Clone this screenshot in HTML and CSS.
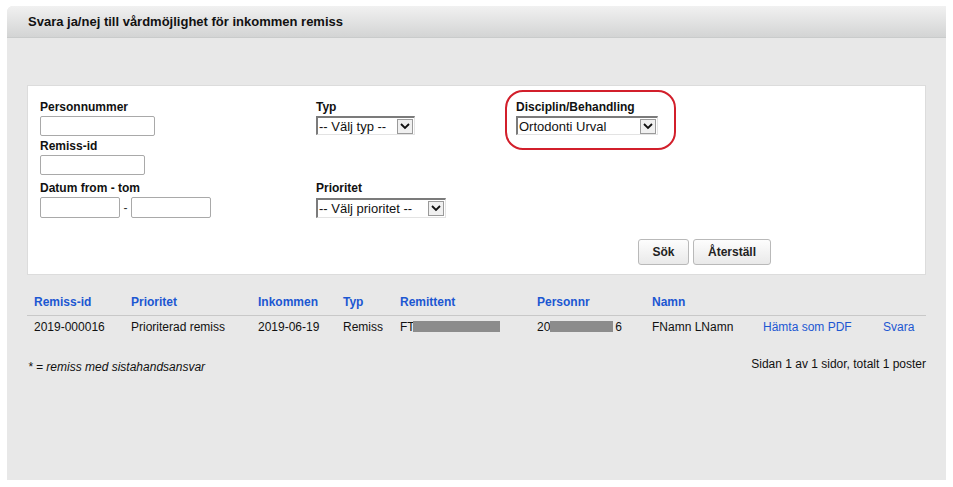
FILE: index.html
```html
<!DOCTYPE html>
<html lang="sv">
<head>
  <meta charset="UTF-8">
  <meta name="viewport" content="width=device-width, initial-scale=1.0">
  <link rel="stylesheet" href="styles.css">
</head>
<body>

  <div class="panel">
    <div class="panel-header">Svara ja/nej till vårdmöjlighet för inkommen remiss</div>

    <div class="panel-body">

      <div class="search-box">
        <div class="search-grid">
          <div class="field">
            <label>Personnummer</label>
            <input type="text" class="input w-pnr">
          </div>
          <div class="field">
            <label>Typ</label>
            <div class="select w-typ"><span class="select-text">-- Välj typ --</span><span class="select-arrow"><svg width="10" height="7" viewBox="0 0 10 7"><path d="M1 1 L5 5 L9 1" fill="none" stroke="#111" stroke-width="1.8"/></svg></span></div>
          </div>
          <div class="field">
            <label>Disciplin/Behandling</label>
            <div class="select w-disc"><span class="select-text">Ortodonti Urval</span><span class="select-arrow"><svg width="10" height="7" viewBox="0 0 10 7"><path d="M1 1 L5 5 L9 1" fill="none" stroke="#111" stroke-width="1.8"/></svg></span></div>
          </div>

          <div class="field">
            <label>Remiss-id</label>
            <input type="text" class="input w-id">
          </div>
          <div></div>
          <div></div>

          <div class="field row3">
            <label>Datum from - tom</label>
            <div class="date-range">
              <input type="text" class="input w-date">
              <span class="dash">-</span>
              <input type="text" class="input w-date">
            </div>
          </div>
          <div class="field row3">
            <label>Prioritet</label>
            <div class="select w-prio"><span class="select-text">-- Välj prioritet --</span><span class="select-arrow"><svg width="10" height="7" viewBox="0 0 10 7"><path d="M1 1 L5 5 L9 1" fill="none" stroke="#111" stroke-width="1.8"/></svg></span></div>
          </div>
          <div></div>
        </div>

        <div class="buttons">
          <button class="btn btn-sok">Sök</button>
          <button class="btn btn-reset">Återställ</button>
        </div>

        <!-- annotation around the discipline field -->
        <div class="highlight"></div>
      </div>

      <table class="result">
        <thead>
          <tr>
            <th class="c-id">Remiss-id</th>
            <th class="c-prio">Prioritet</th>
            <th class="c-date">Inkommen</th>
            <th class="c-typ">Typ</th>
            <th class="c-rem">Remittent</th>
            <th class="c-pnr">Personnr</th>
            <th class="c-namn">Namn</th>
            <th class="c-pdf"></th>
            <th></th>
          </tr>
        </thead>
        <tbody>
          <tr>
            <td>2019-000016</td>
            <td>Prioriterad remiss</td>
            <td>2019-06-19</td>
            <td>Remiss</td>
            <td>FT<span class="masked m-rem"></span></td>
            <td>20<span class="masked m-pnr"></span>6</td>
            <td>FNamn LNamn</td>
            <td><a href="#">Hämta som PDF</a></td>
            <td><a href="#">Svara</a></td>
          </tr>
        </tbody>
      </table>

      <div class="result-footer">
        <span class="note">* = remiss med sistahandsansvar</span>
        <span class="paging">Sidan 1 av 1 sidor, totalt 1 poster</span>
      </div>

    </div>
  </div>

</body>
</html>
```

FILE: styles.css
```css
body {
  margin: 0;
  padding: 6px 7px 0 7px;
  background-color: #fff;
  font-family: 'Liberation Sans', Arial, sans-serif;
  font-size: 12px;
  color: #111;
}

.panel {
  height: 474px;
  background-color: #e8e8e8;
  border-top-left-radius: 6px;
  overflow: hidden;
}

.panel-header {
  height: 31px;
  line-height: 31px;
  padding-left: 21px;
  font-size: 13px;
  font-weight: bold;
  color: #111;
  background: linear-gradient(to bottom, #f1f1f1, #d3d4d4);
  border-bottom: 1px solid #c9cbcb;
}

.panel-body {
  padding: 47px 20px 0 20px;
}

/* search form */
.search-box {
  position: relative;
  background-color: #fff;
  border: 1px solid #dcdcdc;
  padding: 14px 12px 9px 12px;
}

.search-grid {
  display: grid;
  grid-template-columns: 276px 200px 1fr;
  row-gap: 3px;
}

.field label {
  display: block;
  font-weight: bold;
  line-height: 14px;
  margin-bottom: 2px;
}

.field.row3 {
  margin-top: 3px;
}

.input {
  box-sizing: border-box;
  height: 20px;
  margin: 1px 0 0 0;
  border: 1px solid #a9a9a9;
  border-radius: 2px;
  padding: 0 3px;
  font-family: inherit;
  font-size: 12px;
  display: block;
}

.w-pnr { width: 115px; }
.w-id { width: 105px; }
.w-date { width: 80px; }

.date-range {
  display: flex;
  align-items: center;
  margin-top: 1px;
}

.date-range .input {
  margin: 0;
  height: 21px;
}

.dash {
  width: 11px;
  text-align: center;
  color: #333;
}

.select {
  box-sizing: border-box;
  display: flex;
  align-items: center;
  justify-content: space-between;
  height: 19px;
  margin-top: 2px;
  border-top: 2px solid #7b7b7b;
  border-left: 2px solid #7b7b7b;
  border-right: 1px solid #e3e3e3;
  border-bottom: 1px solid #e3e3e3;
  background-color: #fff;
  font-size: 13px;
  padding-left: 1px;
  white-space: nowrap;
}

.select-text {
  line-height: 15px;
}

.select-arrow {
  box-sizing: border-box;
  width: 16px;
  height: 15px;
  margin-right: 1px;
  border: 1px solid #9a9a9a;
  background-color: #f0f0f0;
  display: flex;
  align-items: center;
  justify-content: center;
}

.w-typ { width: 99px; }
.w-prio { width: 130px; margin-top: 3px; height: 20px; }
.w-disc { width: 142px; }

.buttons {
  display: flex;
  gap: 4px;
  margin-top: 21px;
  padding-left: 598px;
}

.btn {
  box-sizing: border-box;
  height: 26px;
  border: 1px solid #b9b9b9;
  border-radius: 3px;
  background: linear-gradient(to bottom, #fdfdfd, #e9e9e9);
  font-family: inherit;
  font-size: 12px;
  font-weight: bold;
  color: #222;
  padding: 0;
}

.btn-sok { width: 51px; }
.btn-reset { width: 78px; }

.highlight {
  position: absolute;
  left: 477px;
  top: 4px;
  width: 167px;
  height: 56px;
  border: 2.5px solid #d21f2b;
  border-radius: 18px;
}

/* results */
.result {
  width: 100%;
  border-collapse: collapse;
  margin-top: 17px;
}

.result th {
  text-align: left;
  font-weight: bold;
  color: #1c57d2;
  line-height: 14px;
  padding: 3px 0 6px 7px;
  border-bottom: 1px solid #c8c8c8;
}

.result td {
  line-height: 14px;
  padding: 4px 0 4px 7px;
  white-space: nowrap;
}

.c-id { width: 90px; }
.c-prio { width: 120px; }
.c-date { width: 78px; }
.c-typ { width: 50px; }
.c-rem { width: 130px; }
.c-pnr { width: 108px; }
.c-namn { width: 104px; }
.c-pdf { width: 113px; }

.result a {
  color: #1c57d2;
  text-decoration: none;
}

.masked {
  display: inline-block;
  height: 11px;
  background-color: #8c8c8c;
  vertical-align: -1px;
}

.m-rem { width: 87px; margin-left: -2px; }
.m-pnr { width: 63px; margin-right: 2px; }

.result-footer {
  display: flex;
  justify-content: space-between;
  align-items: flex-start;
  margin-top: 19px;
}

.note {
  font-style: italic;
  padding-left: 1px;
  padding-top: 3px;
}

.paging {
  color: #111;
}
```
